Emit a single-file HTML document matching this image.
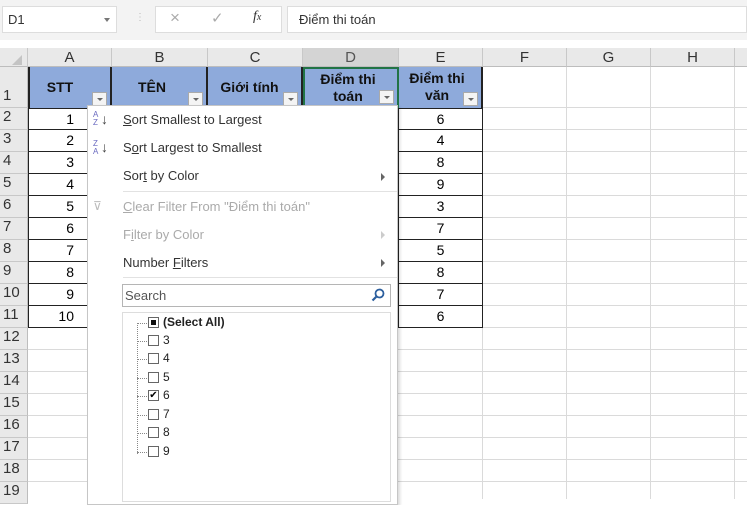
<!DOCTYPE html>
<html><head><meta charset="utf-8"><style>
*{margin:0;padding:0;box-sizing:border-box}
body{width:747px;height:499px;overflow:hidden;background:#fff;font-family:"Liberation Sans",Arial,sans-serif;position:relative}
.a{position:absolute}
.t{font-size:13px;color:#222}
.rh{position:absolute;left:0;width:28px;background:#e9e9e9;border-bottom:1px solid #c8c8c8;border-right:1px solid #bdbdbd;font-size:15px;color:#333;padding-left:3px}
.ch{position:absolute;top:48px;height:19px;background:#e9e9e9;border-right:1px solid #c8c8c8;border-bottom:1px solid #bdbdbd;text-align:center;font-size:15px;color:#333;line-height:19px}
.hl{position:absolute;height:1px;background:#dadada;left:28px;right:0}
.vl{position:absolute;width:1px;background:#dadada;top:67px;bottom:0}
.hd{position:absolute;top:67px;height:41px;background:#8eaadb;font-weight:bold;font-size:14px;color:#111;text-align:center;border-right:2px solid #222}
.dd{position:absolute;width:15px;height:14px;background:#f4f4f4;border:1px solid #aaa;bottom:2px;right:3px}
.dd:after{content:"";position:absolute;left:4px;top:5px;border-left:3px solid transparent;border-right:3px solid transparent;border-top:3px solid #666}
.cell{position:absolute;height:22px;border:1px solid #222;border-top:none;text-align:right;font-size:14px;line-height:21px;padding-right:38px;background:#fff}
.mi{position:absolute;left:123px;font-size:13px;color:#333}
.dis{color:#aaa}
.arr{position:absolute;left:381px;border-top:4px solid transparent;border-bottom:4px solid transparent;border-left:4px solid #666}
.cb{position:absolute;left:148px;width:11px;height:11px;border:1px solid #666;background:#fff}
.lb{position:absolute;left:163px;font-size:12px;color:#222}
</style></head><body>
<div class="a" style="left:0;top:0;width:747px;height:40px;background:#f3f3f3"></div>
<div class="a" style="left:2px;top:6px;width:115px;height:27px;background:#fff;border:1px solid #ddd"></div>
<div class="a t" style="left:8px;top:12px;color:#333">D1</div>
<div class="a" style="left:104px;top:18px;border-left:3px solid transparent;border-right:3px solid transparent;border-top:4px solid #777"></div>
<div class="a" style="left:135px;top:12px;color:#bbb;font-size:10px">⋮</div>
<div class="a" style="left:155px;top:6px;width:127px;height:27px;background:#fff;border:1px solid #ddd"></div>
<div class="a" style="left:170px;top:8px;color:#aaa;font-size:17px">×</div>
<div class="a" style="left:211px;top:9px;color:#aaa;font-size:15px">✓</div>
<div class="a" style="left:253px;top:9px;color:#333;font-size:14px;font-style:italic;font-family:'Liberation Serif',serif">f<span style="font-size:10px">x</span></div>
<div class="a" style="left:287px;top:6px;width:460px;height:27px;background:#fff;border:1px solid #ddd"></div>
<div class="a t" style="left:299px;top:12px;color:#333">Điểm thi toán</div>
<div class="a" style="left:0;top:48px;width:28px;height:19px;background:#e9e9e9;border-right:1px solid #c8c8c8;border-bottom:1px solid #bdbdbd"></div>
<div class="a" style="left:12px;top:55px;border-left:10px solid transparent;border-bottom:10px solid #c4c4c4"></div>
<div class="ch" style="left:28px;width:84px">A</div>
<div class="ch" style="left:112px;width:96px">B</div>
<div class="ch" style="left:208px;width:95px">C</div>
<div class="ch" style="left:303px;width:96px;background:#d4d4d4;color:#555">D</div>
<div class="ch" style="left:399px;width:84px">E</div>
<div class="ch" style="left:483px;width:84px">F</div>
<div class="ch" style="left:567px;width:84px">G</div>
<div class="ch" style="left:651px;width:84px">H</div>
<div class="ch" style="left:735px;width:20px"></div>
<div class="vl" style="left:566px"></div><div class="vl" style="left:650px"></div><div class="vl" style="left:734px"></div>
<div class="vl" style="left:111px"></div><div class="vl" style="left:482px"></div>
<div class="hl" style="top:107px"></div><div class="hl" style="top:129px"></div><div class="hl" style="top:151px"></div><div class="hl" style="top:173px"></div><div class="hl" style="top:195px"></div><div class="hl" style="top:217px"></div><div class="hl" style="top:239px"></div><div class="hl" style="top:261px"></div><div class="hl" style="top:283px"></div><div class="hl" style="top:305px"></div><div class="hl" style="top:327px"></div><div class="hl" style="top:349px"></div><div class="hl" style="top:371px"></div><div class="hl" style="top:393px"></div><div class="hl" style="top:415px"></div><div class="hl" style="top:437px"></div><div class="hl" style="top:459px"></div><div class="hl" style="top:481px"></div>
<div class="rh" style="top:67px;height:41px;padding-top:20px">1</div>
<div class="rh" style="top:108px;height:22px">2</div><div class="rh" style="top:130px;height:22px">3</div><div class="rh" style="top:152px;height:22px">4</div><div class="rh" style="top:174px;height:22px">5</div><div class="rh" style="top:196px;height:22px">6</div><div class="rh" style="top:218px;height:22px">7</div><div class="rh" style="top:240px;height:22px">8</div><div class="rh" style="top:262px;height:22px">9</div><div class="rh" style="top:284px;height:22px">10</div><div class="rh" style="top:306px;height:22px">11</div><div class="rh" style="top:328px;height:22px">12</div><div class="rh" style="top:350px;height:22px">13</div><div class="rh" style="top:372px;height:22px">14</div><div class="rh" style="top:394px;height:22px">15</div><div class="rh" style="top:416px;height:22px">16</div><div class="rh" style="top:438px;height:22px">17</div><div class="rh" style="top:460px;height:22px">18</div><div class="rh" style="top:482px;height:22px">19</div>
<div class="hd" style="left:28px;width:84px;border-left:2px solid #222;padding-top:12px;padding-right:20px">STT<div class="dd"></div></div>
<div class="hd" style="left:112px;width:96px;padding-top:12px;padding-right:14px">TÊN<div class="dd"></div></div>
<div class="hd" style="left:208px;width:95px;padding-top:12px;padding-right:10px">Giới tính<div class="dd"></div></div>
<div class="hd" style="left:303px;width:96px;border:2px solid #217346;line-height:17px;padding-top:2px;padding-right:6px">Điểm thi<br>toán<div class="dd"></div></div>
<div class="hd" style="left:399px;width:84px;line-height:17px;padding-top:3px;padding-right:6px">Điểm thi<br>văn<div class="dd"></div></div>
<div class="cell" style="left:28px;top:108px;width:85px;border-top:1px solid #222">1</div>
<div class="cell" style="left:28px;top:130px;width:85px">2</div><div class="cell" style="left:28px;top:152px;width:85px">3</div><div class="cell" style="left:28px;top:174px;width:85px">4</div><div class="cell" style="left:28px;top:196px;width:85px">5</div><div class="cell" style="left:28px;top:218px;width:85px">6</div><div class="cell" style="left:28px;top:240px;width:85px">7</div><div class="cell" style="left:28px;top:262px;width:85px">8</div><div class="cell" style="left:28px;top:284px;width:85px">9</div><div class="cell" style="left:28px;top:306px;width:85px">10</div>
<div class="cell" style="left:398px;top:108px;width:85px;border-top:1px solid #222;text-align:center;padding:0">6</div>
<div class="cell" style="left:398px;top:130px;width:85px;text-align:center;padding:0">4</div><div class="cell" style="left:398px;top:152px;width:85px;text-align:center;padding:0">8</div><div class="cell" style="left:398px;top:174px;width:85px;text-align:center;padding:0">9</div><div class="cell" style="left:398px;top:196px;width:85px;text-align:center;padding:0">3</div><div class="cell" style="left:398px;top:218px;width:85px;text-align:center;padding:0">7</div><div class="cell" style="left:398px;top:240px;width:85px;text-align:center;padding:0">5</div><div class="cell" style="left:398px;top:262px;width:85px;text-align:center;padding:0">8</div><div class="cell" style="left:398px;top:284px;width:85px;text-align:center;padding:0">7</div><div class="cell" style="left:398px;top:306px;width:85px;text-align:center;padding:0">6</div>
<div class="a" style="left:87px;top:105px;width:311px;height:400px;background:#fff;border:1px solid #c6c6c6;box-shadow:2px 2px 3px rgba(0,0,0,.15)"></div>
<div class="a" style="left:93px;top:111px;font-size:8px;line-height:8px;color:#6a6ac0">A<br>Z</div><div class="a" style="left:101px;top:111px;font-size:14px;color:#444">↓</div>
<div class="a" style="left:93px;top:140px;font-size:8px;line-height:8px;color:#6a6ac0">Z<br>A</div><div class="a" style="left:101px;top:139px;font-size:14px;color:#444">↓</div>
<div class="a" style="left:93px;top:199px;color:#bbb;font-size:12px">⊽</div>
<div class="mi" style="top:112px"><u>S</u>ort Smallest to Largest</div>
<div class="mi" style="top:140px">S<u>o</u>rt Largest to Smallest</div>
<div class="mi" style="top:168px">Sor<u>t</u> by Color</div><div class="arr" style="top:173px"></div>
<div class="a" style="left:123px;top:191px;width:274px;height:1px;background:#e2e2e2"></div>
<div class="mi dis" style="top:199px"><u>C</u>lear Filter From "Điểm thi toán"</div>
<div class="mi dis" style="top:227px">F<u>i</u>lter by Color</div><div class="arr" style="top:231px;border-left-color:#ccc"></div>
<div class="mi" style="top:255px">Number <u>F</u>ilters</div><div class="arr" style="top:259px"></div>
<div class="a" style="left:123px;top:277px;width:274px;height:1px;background:#e2e2e2"></div>
<div class="a" style="left:122px;top:284px;width:269px;height:23px;border:1px solid #b5b5b5;background:#fff"></div>
<div class="mi" style="top:288px;left:125px;color:#555">Search</div>
<svg class="a" style="left:371px;top:288px" width="14" height="14"><circle cx="8.5" cy="5.5" r="4" fill="none" stroke="#2c5f9e" stroke-width="1.8"/><line x1="5.5" y1="8.5" x2="1.5" y2="12.5" stroke="#2c5f9e" stroke-width="2.2"/></svg>
<div class="a" style="left:122px;top:312px;width:269px;height:190px;border:1px solid #ddd"></div>
<div class="a" style="left:137px;top:323px;width:1px;height:131px;border-left:1px dotted #888"></div>
<div class="a" style="left:137px;top:323px;width:10px;border-top:1px dotted #888"></div>
<div class="a" style="left:137px;top:341px;width:10px;border-top:1px dotted #888"></div>
<div class="a" style="left:137px;top:359px;width:10px;border-top:1px dotted #888"></div>
<div class="a" style="left:137px;top:378px;width:10px;border-top:1px dotted #888"></div>
<div class="a" style="left:137px;top:396px;width:10px;border-top:1px dotted #888"></div>
<div class="a" style="left:137px;top:415px;width:10px;border-top:1px dotted #888"></div>
<div class="a" style="left:137px;top:433px;width:10px;border-top:1px dotted #888"></div>
<div class="a" style="left:137px;top:452px;width:10px;border-top:1px dotted #888"></div>
<div class="cb" style="top:317px"><div style="margin:2px;width:5px;height:5px;background:#111"></div></div><div class="lb" style="top:315px;font-weight:bold">(Select All)</div>
<div class="cb" style="top:335px"></div><div class="lb" style="top:333px">3</div>
<div class="cb" style="top:353px"></div><div class="lb" style="top:351px">4</div>
<div class="cb" style="top:372px"></div><div class="lb" style="top:370px">5</div>
<div class="cb" style="top:390px;font-size:10px;line-height:9px;text-align:center">✔</div><div class="lb" style="top:388px">6</div>
<div class="cb" style="top:409px"></div><div class="lb" style="top:407px">7</div>
<div class="cb" style="top:427px"></div><div class="lb" style="top:425px">8</div>
<div class="cb" style="top:446px"></div><div class="lb" style="top:444px">9</div>
</body></html>
